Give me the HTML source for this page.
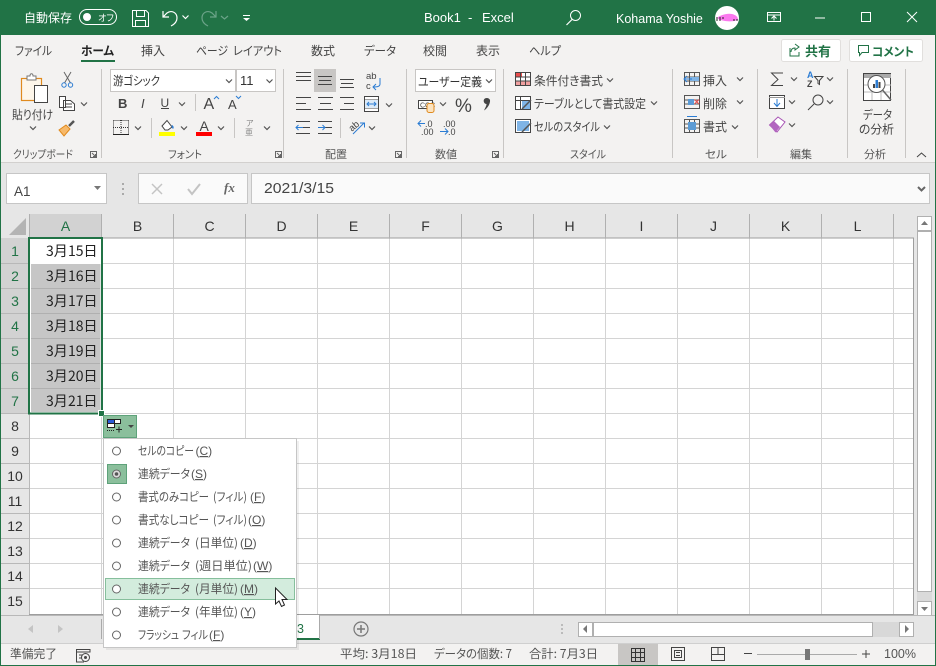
<!DOCTYPE html>
<html lang="ja"><head><meta charset="utf-8"><title>Book1 - Excel</title>
<style>
html,body{margin:0;padding:0;background:#e6e6e6}
svg{display:block;font-family:"Liberation Sans","Noto Sans CJK JP",sans-serif}
.j{font-family:"Noto Sans CJK JP","Liberation Sans",sans-serif;font-feature-settings:"palt"}
.t{font-size:12px;fill:#444}
.l{font-size:11px;fill:#555}
.hd{font-size:14px;fill:#333;text-anchor:middle}
.m{font-size:12px;fill:#555}
.d{font-size:14px;fill:#222}
</style></head><body>
<svg width="936" height="666" viewBox="0 0 936 666" xmlns="http://www.w3.org/2000/svg">
<defs>
<path id="c" d="M-3-1.500 0 1.500 3-1.500" fill="none" stroke="#555" stroke-width="1.200"/>
<path id="cw" d="M-3-1.500 0 1.500 3-1.500" fill="none" stroke="#fff" stroke-width="1.200"/>
<path id="lau" d="M.5.5H6.500V6.500H.5ZM2 2 5.500 5.500M5.500 3V5.500H3" fill="none" stroke="#666"/>
<g id="radio"><circle r="4" fill="#fff" stroke="#666"/></g>
</defs>
<rect width="936" height="666" fill="#217346"/>
<rect x="1" y="35" width="934" height="128" fill="#f3f2f1"/>
<rect x="1" y="162" width="934" height="1" fill="#d2d0ce"/>
<rect x="1" y="163" width="934" height="481" fill="#e6e6e6"/>
<rect x="1" y="644" width="934" height="21" fill="#f3f2f1"/>

<!-- title bar -->
<text class="j" x="24" y="22" font-size="12" fill="#fff">自動保存</text>
<rect x="79.500" y="9.500" width="37" height="15" rx="7.500" fill="none" stroke="#fff"/>
<circle cx="87" cy="17" r="4" fill="#fff"/>
<text class="j" x="98" y="21" font-size="9" fill="#fff">オフ</text>
<path d="M132.500 10.500H146L148.500 13V26.500H132.500ZM136.500 10.500V16.500H144.500V10.500M135.500 26.500V20.500H145.500V26.500" fill="none" stroke="#fff"/>
<path d="M163 11V17H169M163.500 16.500 167 13C171 10 177 12 177 18 177 21 175 24 171 26" fill="none" stroke="#fff" stroke-width="1.200"/>
<use href="#cw" x="185.500" y="17"/>
<path d="M216 11V17H210M215.500 16.500 212 13C208 10 202 12 202 18 202 21 204 24 208 26" fill="none" stroke="#6ba388" stroke-width="1.200"/>
<path d="M221 16 224.500 19 228 16" fill="none" stroke="#6ba388" stroke-width="1.200"/>
<path d="M243 15.500H250" stroke="#fff"/><path d="M243 18 246.500 21 250 18Z" fill="#fff"/>
<text x="424" y="22" font-size="13" fill="#fff">Book1</text>
<text x="468" y="22" font-size="13" fill="#fff">-</text>
<text x="482" y="22" font-size="13" fill="#fff">Excel</text>
<circle cx="575.500" cy="15.500" r="5" fill="none" stroke="#fff"/><path d="M572 19.500 566.500 25" stroke="#fff" stroke-width="1.200"/>
<text x="616" y="23" font-size="12.500" fill="#fff">Kohama Yoshie</text>
<circle cx="727" cy="18" r="12" fill="#fff"/>
<path d="M717 18C720 15 727 13 732 14 736 15 738 17 738 20 733 22 722 22 717 18Z" fill="#fa78ee"/>
<path d="M716 18H724M716 20H722M733 20H739" stroke="#222" stroke-dasharray="2 1"/>
<path d="M767.500 12.500H780.500V21.500H767.500ZM767.500 15H780.500M774 20.500V16.500M771.500 18.500 774 16 776.500 18.500" fill="none" stroke="#fff"/>
<path d="M815 18H825" stroke="#fff"/>
<rect x="861.500" y="12.500" width="9" height="9" fill="none" stroke="#fff"/>
<path d="M907 12 917 22M917 12 907 22" stroke="#fff"/>

<!-- tabs -->
<g class="j t">
<text x="15" y="55" textLength="37" lengthAdjust="spacingAndGlyphs">ファイル</text>
<text x="81" y="55" font-weight="700" fill="#222" textLength="33" lengthAdjust="spacingAndGlyphs">ホーム</text>
<text x="141" y="55">挿入</text>
<text x="196" y="55" textLength="32" lengthAdjust="spacingAndGlyphs">ページ</text>
<text x="233" y="55" textLength="49" lengthAdjust="spacingAndGlyphs">レイアウト</text>
<text x="311" y="55">数式</text>
<text x="364" y="55" textLength="32" lengthAdjust="spacingAndGlyphs">データ</text>
<text x="423" y="55">校閲</text>
<text x="476" y="55">表示</text>
<text x="529" y="55" textLength="32" lengthAdjust="spacingAndGlyphs">ヘルプ</text>
</g>
<rect x="81" y="60" width="34" height="2" fill="#217346"/>
<rect x="781.500" y="39.500" width="59" height="22" rx="2" fill="#fff" stroke="#e1dfdd"/>
<path d="M790 48V56H799V52M795 44 799 47 795 50V48C792 48 791 50 791 52" fill="none" stroke="#217346"/>
<text class="j" x="805" y="56" font-size="13" font-weight="700" fill="#217346">共有</text>
<rect x="849.500" y="39.500" width="73" height="22" rx="2" fill="#fff" stroke="#e1dfdd"/>
<path d="M858.500 45.500H868.500V52.500H862L859.500 55.500V52.500H858.500Z" fill="none" stroke="#217346"/>
<text class="j" x="872" y="56" font-size="12" font-weight="700" fill="#217346" textLength="42" lengthAdjust="spacingAndGlyphs">コメント</text>

<!-- group separators -->
<g fill="#c8c6c4">
<rect x="101" y="69" width="1" height="89"/><rect x="283" y="69" width="1" height="89"/><rect x="406" y="69" width="1" height="89"/><rect x="503" y="69" width="1" height="89"/><rect x="672" y="69" width="1" height="89"/><rect x="757" y="69" width="1" height="89"/><rect x="847" y="69" width="1" height="89"/><rect x="905" y="69" width="1" height="89"/>
<rect x="195" y="94" width="1" height="17"/><rect x="151" y="118" width="1" height="20"/><rect x="234" y="118" width="1" height="20"/><rect x="340" y="118" width="1" height="20"/>
</g>

<!-- clipboard -->
<rect x="21.500" y="78.500" width="20" height="22" fill="#fdf6ea" stroke="#e08a1e" stroke-width="1.200"/>
<path d="M27 78V76H30C30 73 33 73 33 76H36V80H27Z" fill="#fff" stroke="#777"/>
<rect x="34.500" y="85.500" width="13" height="17" fill="#fff" stroke="#444"/>
<text class="j" x="12" y="119" font-size="12" fill="#444" textLength="41" lengthAdjust="spacingAndGlyphs">貼り付け</text>
<use href="#c" x="33" y="128"/>
<path d="M64 72 70.500 83M71 72 64.500 83" stroke="#666" fill="none"/>
<circle cx="64" cy="85" r="2.200" fill="none" stroke="#2b7cd3"/><circle cx="70.500" cy="85" r="2.200" fill="none" stroke="#2b7cd3"/>
<path d="M59.500 96.500H65.500V107.500H59.500ZM63.500 100.500H70.500L74.500 104V110.500H63.500ZM66 104H72M66 107H72" fill="#fff" stroke="#444"/>
<use href="#c" x="84" y="104"/>
<path d="M59 130 66 125 70 129 64 136Z" fill="#f7b96a" stroke="#e08a1e"/>
<path d="M69 126 74 121" stroke="#555" stroke-width="2.500"/>
<text class="j l" x="13" y="158" textLength="60" lengthAdjust="spacingAndGlyphs">クリップボード</text>
<use href="#lau" x="90" y="151"/>

<!-- font -->
<rect x="110.500" y="69.500" width="125" height="22" fill="#fff" stroke="#c8c6c4"/>
<rect x="236.500" y="69.500" width="39" height="22" fill="#fff" stroke="#c8c6c4"/>
<text class="j" x="113" y="85" font-size="12" fill="#333" textLength="47" lengthAdjust="spacingAndGlyphs">游ゴシック</text>
<use href="#c" x="229" y="81"/>
<text x="240" y="85" font-size="13" fill="#333">11</text>
<use href="#c" x="269.500" y="81"/>
<text x="118" y="108" font-size="13" font-weight="700" fill="#444">B</text>
<text x="141" y="108" font-size="13" font-style="italic" fill="#444">I</text>
<text x="160.500" y="107" font-size="12" fill="#444">U</text><rect x="161" y="108" width="8" height="1" fill="#444"/>
<use href="#c" x="182" y="104"/>
<text x="203.500" y="109" font-size="16" fill="#444">A</text><path d="M214 99 216.500 96.500 219 99" fill="none" stroke="#2b7cd3"/>
<text x="228" y="109" font-size="13" fill="#444">A</text><path d="M236 96 238.500 98.500 241 96" fill="none" stroke="#2b7cd3"/>
<path d="M113.500 120.500H128.500M113.500 120.500V134M128.500 120.500V134M121 120V134M113 127.500H129" stroke="#333" stroke-dasharray="1 1" fill="none"/>
<rect x="113" y="134" width="16" height="1" fill="#222"/>
<use href="#c" x="138" y="128"/>
<path d="M162 126 167 120.500 172 127 168 130H165Z" fill="#fff" stroke="#444"/><path d="M172 125C174 126 174 128 173 129 172 128 171 126 172 125Z" fill="#2b7cd3"/>
<rect x="159" y="132" width="16" height="4" fill="#ff0"/>
<use href="#c" x="184" y="128"/>
<text x="199.500" y="131" font-size="14" fill="#444">A</text>
<rect x="196" y="132" width="16" height="4" fill="#f00"/>
<use href="#c" x="221" y="128"/>
<text class="j" x="246" y="126" font-size="8" fill="#888">ア</text><text class="j" x="245" y="135" font-size="8" fill="#888">亜</text>
<use href="#c" x="267" y="128"/>
<text class="j l" x="168" y="158" font-size="11.500" textLength="34" lengthAdjust="spacingAndGlyphs">フォント</text>
<use href="#lau" x="275" y="151"/>

<!-- alignment -->
<rect x="314" y="69" width="22" height="23" fill="#c8c6c4"/>
<g stroke="#444" fill="none">
<path d="M296 72.500H311M296 76.500H311M296 80.500H311"/>
<path d="M318 76.500H332M319 80.500H331M318 84.500H332"/>
<path d="M340 79.500H354M341 83.500H353M340 87.500H354"/>
<path d="M296 97.500H311M296 103.500H306M296 109.500H311M318 97.500H333M320 103.500H331M318 109.500H333M340 97.500H354M344 103.500H354M340 109.500H354"/>
<path d="M302 127.500H310M296 121.500H310M296 133.500H310"/>
<path d="M318 121.500H332M325 127.500H332M318 133.500H332"/>
</g>
<path d="M296 127.500H303M298.500 125 296 127.500 298.500 130" fill="none" stroke="#2b7cd3"/>
<path d="M318 127.500H325M322.500 125 325 127.500 322.500 130" fill="none" stroke="#2b7cd3"/>
<text x="366" y="79" font-size="9.500" fill="#444">ab</text><text x="366" y="89" font-size="9.500" fill="#444">c</text>
<path d="M380 78V84C380 87 376 87 373 87M376 84 373 87 376 90" fill="none" stroke="#2b7cd3"/>
<rect x="364.500" y="96.500" width="14" height="15" fill="#fff" stroke="#444"/><path d="M364 100H379M364 108H379" stroke="#444"/>
<rect x="365" y="100" width="13" height="8" fill="#dceaf7"/>
<path d="M367 104H376M369 102 367 104 369 106M374 102 376 104 374 106" fill="none" stroke="#2b7cd3"/>
<use href="#c" x="389" y="105"/>
<text x="349" y="130" font-size="9.500" fill="#444" transform="rotate(-40 353 127)">ab</text>
<path d="M353 134 364 123M360 123H364.500V127.500" fill="none" stroke="#2b7cd3"/>
<use href="#c" x="372" y="128"/>
<text class="j l" x="325" y="158" font-size="12">配置</text>
<use href="#lau" x="395" y="151"/>

<!-- number -->
<rect x="415.500" y="69.500" width="80" height="22" fill="#fff" stroke="#c8c6c4"/>
<text class="j" x="418" y="86" font-size="12" fill="#333" textLength="64" lengthAdjust="spacingAndGlyphs">ユーザー定義</text>
<use href="#c" x="489" y="81"/>
<rect x="418.500" y="100.500" width="14" height="8" fill="#fff" stroke="#444"/>
<text x="420" y="107.500" font-size="7" fill="#444">CCC</text>
<rect x="427" y="103.500" width="7" height="9" rx="2" fill="#fbe3c0" stroke="#e08a1e"/>
<use href="#c" x="443" y="104"/>
<text x="455" y="112" font-size="19" fill="#444">%</text>
<path d="M484 99.500C485 97.500 489 97.500 490 100 490.500 103 488 108 484 110.500 485.500 107.500 486.500 105.500 486.500 104 484.500 104 483 101.500 484 99.500Z" fill="#444"/>
<text x="425" y="127" font-size="9" fill="#444">.0</text>
<text x="421" y="135" font-size="9" fill="#444">.00</text>
<path d="M418 123.500H425M421 120.500 418 123.500 421 126.500" fill="none" stroke="#2b7cd3"/>
<text x="443" y="127" font-size="9" fill="#444">.00</text>
<text x="448" y="135" font-size="9" fill="#444">.0</text>
<path d="M440 131.500H448M445 128.500 448 131.500 445 134.500" fill="none" stroke="#2b7cd3"/>
<text class="j l" x="435" y="158" font-size="12">数値</text>
<use href="#lau" x="492" y="151"/>

<!-- styles -->
<rect x="515.500" y="72.500" width="15" height="13" fill="#fff" stroke="#444"/>
<rect x="516" y="73" width="6" height="4" fill="#e84c4c"/><rect x="516" y="81" width="14" height="4" fill="#f0a0a0"/><path d="M520.500 73V85M525.500 73V85M516 77H530M516 81H530" stroke="#444"/>
<rect x="515.500" y="96.500" width="15" height="13" fill="#fff" stroke="#444"/><rect x="522" y="100" width="8" height="9" fill="#7fb4e6"/><path d="M520.500 97V110M516 100.500H530" stroke="#444"/><path d="M522 109 531 100" stroke="#555" stroke-width="1.500"/>
<rect x="515.500" y="119.500" width="15" height="13" fill="#fff" stroke="#444"/><rect x="517" y="121" width="12" height="10" fill="#7fb4e6"/><path d="M522 132 531 123" stroke="#555" stroke-width="1.500"/>
<g class="j" font-size="12" fill="#444">
<text x="534" y="85" textLength="69" lengthAdjust="spacingAndGlyphs">条件付き書式</text>
<text x="534" y="108" textLength="112" lengthAdjust="spacingAndGlyphs">テーブルとして書式設定</text>
<text x="534" y="131" textLength="66" lengthAdjust="spacingAndGlyphs">セルのスタイル</text>
</g>
<use href="#c" x="610" y="80"/><use href="#c" x="654" y="103"/><use href="#c" x="607" y="127"/>
<text class="j l" x="570" y="158" font-size="12" textLength="36" lengthAdjust="spacingAndGlyphs">スタイル</text>

<!-- cells -->
<path d="M684.500 72.500H699.500V85.500H684.500ZM684 77H700M684 81H700M689.500 72V86M694.500 72V86" fill="none" stroke="#555"/>
<rect x="690" y="77" width="9" height="4" fill="#7fb4e6"/><path d="M684 79H692M687 76 684 79 687 82" fill="none" stroke="#2b7cd3"/>
<path d="M684.500 95.500H699.500V108.500H684.500ZM684 100H700M684 104H700" fill="none" stroke="#555"/><rect x="688" y="99" width="6" height="6" fill="#5b9bd5"/>
<path d="M694.500 99.500 699 104M699 99.500 694.500 104" stroke="#e84c4c"/>
<path d="M684.500 119.500H699.500V132.500H684.500ZM689.500 120V133M694.500 120V133M684 124H700M684 128H700" fill="none" stroke="#555"/><rect x="688" y="122" width="8" height="8" fill="#5b9bd5"/>
<path d="M687 116.500H697" stroke="#2b7cd3"/>
<g class="j" font-size="12" fill="#444">
<text x="703" y="85">挿入</text><text x="703" y="108">削除</text><text x="703" y="131">書式</text>
</g>
<use href="#c" x="740" y="79"/><use href="#c" x="740" y="102"/><use href="#c" x="735" y="127"/>
<text class="j l" x="705" y="158" font-size="12" textLength="22" lengthAdjust="spacingAndGlyphs">セル</text>

<!-- editing -->
<path d="M783 73H771.500L778 79.500 771.500 85.500H783" fill="none" stroke="#444"/>
<use href="#c" x="794" y="79"/>
<text x="807" y="78" font-size="9" font-weight="700" fill="#2b7cd3">A</text><text x="807" y="87" font-size="9" font-weight="700" fill="#444">Z</text>
<path d="M814.500 76.500H823L819.500 80.500V84.500L818 83.500V80.500Z" fill="none" stroke="#444"/>
<use href="#c" x="830" y="79"/>
<rect x="769.500" y="95.500" width="15" height="13" fill="#fff" stroke="#444"/><path d="M769 97.500H785" stroke="#999"/><path d="M777 99V106M774 103 777 106.500 780 103" fill="none" stroke="#2b7cd3"/>
<use href="#c" x="792" y="102"/>
<circle cx="818" cy="100" r="5" fill="none" stroke="#444"/><path d="M814 104 808 110" stroke="#444"/>
<use href="#c" x="830" y="102"/>
<path d="M769.500 125 778 117 785 122 777 132Z" fill="#fff" stroke="#a855b5"/><path d="M769.500 125 774 121 780 127 775.500 132.500Z" fill="#b266c0"/>
<use href="#c" x="792" y="125"/>
<text class="j l" x="790" y="158" font-size="12">編集</text>

<!-- analysis -->
<rect x="863.500" y="73.500" width="27" height="27" fill="#fff" stroke="#444"/><rect x="864" y="74" width="27" height="4" fill="#aaa"/>
<path d="M864 85H891M864 92H891M872 78V100M881 78V100" stroke="#bbb"/>
<circle cx="876.500" cy="84" r="8.500" fill="#fff" stroke="#555"/><path d="M882.500 90 891 100" stroke="#666" stroke-width="1.500"/>
<rect x="873" y="84" width="2" height="4" fill="#444"/><rect x="875.500" y="80" width="2.500" height="8" fill="#2b7cd3"/><rect x="878.500" y="82" width="2" height="6" fill="#444"/>
<text class="j" x="863" y="119" font-size="12" fill="#444" textLength="29" lengthAdjust="spacingAndGlyphs">データ</text>
<text class="j" x="859" y="133.500" font-size="12" fill="#444" textLength="35" lengthAdjust="spacingAndGlyphs">の分析</text>
<text class="j l" x="864" y="158" font-size="12">分析</text>
<path d="M917 157 921.500 153 926 157" fill="none" stroke="#444"/>

<!-- formula bar -->
<rect x="6.500" y="173.500" width="100" height="30" fill="#fff" stroke="#c6c6c6"/>
<text x="14" y="196" font-size="13.500" fill="#444">A1</text>
<path d="M94 186H101L97.500 190Z" fill="#777"/>
<g fill="#aaa"><rect x="122" y="183" width="2" height="2"/><rect x="122" y="188" width="2" height="2"/><rect x="122" y="193" width="2" height="2"/></g>
<rect x="138.500" y="173.500" width="109" height="30" fill="#fafafa" stroke="#c6c6c6"/>
<path d="M152 184 162 194M162 184 152 194" stroke="#c4c4c4" stroke-width="1.500"/>
<path d="M188 189 192 194 200 184" fill="none" stroke="#c4c4c4" stroke-width="2"/>
<text x="224" y="192" font-size="13" font-style="italic" font-weight="700" fill="#666" font-family="Liberation Serif">fx</text>
<rect x="251.500" y="173.500" width="678" height="30" fill="#fafafa" stroke="#c6c6c6"/>
<text x="264" y="193" font-size="14.500" fill="#444" textLength="70" lengthAdjust="spacingAndGlyphs">2021/3/15</text>
<path d="M918 187 921.500 190.500 925 187" fill="none" stroke="#666" stroke-width="2"/>

<!-- grid -->
<rect x="30" y="238" width="884" height="376" fill="#fff"/>
<g stroke="#d4d4d4">
<path d="M101.500 238V614M173.500 238V614M245.500 238V614M317.500 238V614M389.500 238V614M461.500 238V614M533.500 238V614M605.500 238V614M677.500 238V614M749.500 238V614M821.500 238V614M893.500 238V614"/>
<path d="M30 263.500H913M30 288.500H913M30 313.500H913M30 338.500H913M30 363.500H913M30 388.500H913M30 413.500H913M30 438.500H913M30 463.500H913M30 488.500H913M30 513.500H913M30 538.500H913M30 563.500H913M30 588.500H913"/>
</g>
<path d="M913.500 238V614.500H29" fill="none" stroke="#9e9e9e"/>
<path d="M29 238H914" stroke="#9e9e9e"/>

<!-- column headers -->
<path d="M26 218V235H9Z" fill="#b4b4b4"/>
<rect x="29" y="214" width="73" height="24" fill="#d2d2d2"/>
<g stroke="#b0b0b0">
<path d="M29.500 214V238M101.500 214V238M173.500 214V238M245.500 214V238M317.500 214V238M389.500 214V238M461.500 214V238M533.500 214V238M605.500 214V238M677.500 214V238M749.500 214V238M821.500 214V238M893.500 214V238"/>
</g>
<g class="hd">
<text x="65.500" y="231" fill="#217346">A</text><text x="137.500" y="231">B</text><text x="209.500" y="231">C</text><text x="281.500" y="231">D</text><text x="353.500" y="231">E</text><text x="425.500" y="231">F</text><text x="497.500" y="231">G</text><text x="569.500" y="231">H</text><text x="641.500" y="231">I</text><text x="713.500" y="231">J</text><text x="785.500" y="231">K</text><text x="857.500" y="231">L</text>
</g>

<!-- row headers -->
<rect x="1" y="238" width="28" height="176" fill="#d2d2d2"/>
<g stroke="#b8b8b8">
<path d="M1 263.500H29M1 288.500H29M1 313.500H29M1 338.500H29M1 363.500H29M1 388.500H29M1 413.500H29M1 438.500H29M1 463.500H29M1 488.500H29M1 513.500H29M1 538.500H29M1 563.500H29M1 588.500H29M29.500 238V614"/>
</g>
<g class="hd">
<text x="15" y="256" fill="#217346">1</text><text x="15" y="281" fill="#217346">2</text><text x="15" y="306" fill="#217346">3</text><text x="15" y="331" fill="#217346">4</text><text x="15" y="356" fill="#217346">5</text><text x="15" y="381" fill="#217346">6</text><text x="15" y="406" fill="#217346">7</text>
<text x="15" y="431">8</text><text x="15" y="456">9</text><text x="15" y="481">10</text><text x="15" y="506">11</text><text x="15" y="531">12</text><text x="15" y="556">13</text><text x="15" y="581">14</text><text x="15" y="606">15</text>
</g>

<!-- selection -->
<rect x="30" y="239" width="71" height="173" fill="#fff"/>
<rect x="31" y="264" width="69.500" height="148" fill="#c6c6c6"/>
<path d="M31 288.500H100M31 313.500H100M31 338.500H100M31 363.500H100M31 388.500H100" stroke="#b0b0b0"/>
<rect x="29" y="238" width="73" height="175.500" fill="none" stroke="#217346" stroke-width="2"/>
<rect x="98.500" y="410.500" width="6" height="6" fill="#217346" stroke="#fff"/>
<g class="j d">
<text y="256"><tspan x="46">3月</tspan><tspan x="68">15日</tspan></text>
<text y="281"><tspan x="46">3月</tspan><tspan x="68">16日</tspan></text>
<text y="306"><tspan x="46">3月</tspan><tspan x="68">17日</tspan></text>
<text y="331"><tspan x="46">3月</tspan><tspan x="68">18日</tspan></text>
<text y="356"><tspan x="46">3月</tspan><tspan x="68">19日</tspan></text>
<text y="381"><tspan x="46">3月</tspan><tspan x="68">20日</tspan></text>
<text y="406"><tspan x="46">3月</tspan><tspan x="68">21日</tspan></text>
</g>

<!-- scrollbars -->
<rect x="917" y="216" width="15" height="399" fill="#dadada"/>
<rect x="917.500" y="231.500" width="14" height="360" fill="#fff" stroke="#b0b0b0"/>
<rect x="917.500" y="216.500" width="14" height="14" fill="#fff" stroke="#b0b0b0"/>
<path d="M921 225H928L924.500 221Z" fill="#777"/>
<rect x="917.500" y="601.500" width="14" height="14" fill="#fff" stroke="#b0b0b0"/>
<path d="M921 607H928L924.500 611Z" fill="#777"/>

<!-- sheet tabs -->
<rect x="1" y="615" width="934" height="28" fill="#e6e6e6"/>
<rect x="1" y="615" width="934" height="1" fill="#b8b8b8"/>
<rect x="1" y="643" width="934" height="1" fill="#cfcfcf"/>
<path d="M33 625V633L28 629ZM58 625V633L63 629Z" fill="#c4c4c4"/>
<rect x="101" y="619" width="1" height="20" fill="#aaa"/>
<rect x="296" y="615" width="23" height="23" fill="#fff"/>
<rect x="296" y="638" width="24" height="2" fill="#217346"/>
<rect x="319" y="615" width="1" height="24" fill="#aaa"/>
<text x="297" y="633" font-size="12.500" fill="#217346">3</text>
<circle cx="361" cy="629" r="7" fill="none" stroke="#777" stroke-width="1.200"/>
<path d="M357 629H365M361 625V633" stroke="#777" stroke-width="1.500"/>
<g fill="#bbb"><rect x="561" y="624" width="2" height="2"/><rect x="561" y="628" width="2" height="2"/><rect x="561" y="632" width="2" height="2"/></g>
<rect x="578.500" y="622.500" width="14" height="14" fill="#fff" stroke="#b0b0b0"/>
<path d="M587 625V633L583 629Z" fill="#777"/>
<rect x="593" y="622" width="306" height="15" fill="#d8d8d8"/>
<rect x="593.500" y="622.500" width="279" height="14" fill="#fff" stroke="#b0b0b0"/>
<rect x="899.500" y="622.500" width="14" height="14" fill="#fff" stroke="#b0b0b0"/>
<path d="M905 625V633L909 629Z" fill="#777"/>

<!-- status bar -->
<rect x="1" y="644" width="934" height="21" fill="#f3f2f1"/>
<text class="j" x="10" y="658" font-size="12" fill="#555" textLength="47" lengthAdjust="spacingAndGlyphs">準備完了</text>
<path d="M76.500 649.500H90V652H76.500ZM76.500 652V662H84M79 655H84M79 658H83" fill="none" stroke="#444"/><circle cx="85.500" cy="657.500" r="4" fill="#f3f2f1" stroke="#444"/><circle cx="85.500" cy="657.500" r="1.500" fill="#444"/>
<g class="j" font-size="12" fill="#555">
<text x="340" y="658" textLength="77" lengthAdjust="spacingAndGlyphs">平均: 3月18日</text>
<text x="434" y="658" textLength="78" lengthAdjust="spacingAndGlyphs">データの個数: 7</text>
<text x="529" y="658" textLength="69" lengthAdjust="spacingAndGlyphs">合計: 7月3日</text>
</g>
<rect x="618" y="644" width="40" height="21" fill="#c8c6c4"/>
<path d="M631.500 648.500H644.500V661.500H631.500ZM631 652.500H645M631 657.500H645M635.500 648V662M640.500 648V662" fill="none" stroke="#333"/>
<path d="M671.500 647.500H684.500V660.500H671.500ZM674.500 650.500H681.500V657.500H674.500ZM676 652.500H680M676 655.500H680" fill="none" stroke="#444"/>
<path d="M711.500 647.500H724.500V660.500H711.500ZM711.500 654.500H724.500M718 647.500V654.500" fill="none" stroke="#444"/>
<path d="M744 653.500H752" stroke="#444"/>
<path d="M757 654.500H857" stroke="#aaa"/>
<rect x="805" y="649" width="5" height="11" fill="#777"/>
<path d="M862 654H870M866 650V658" stroke="#444"/>
<text x="884" y="658" font-size="13" fill="#555" textLength="32" lengthAdjust="spacingAndGlyphs">100%</text>

<!-- autofill button -->
<rect x="103.500" y="415.500" width="33" height="22" fill="#8bbf9c" stroke="#5ea27a"/>
<rect x="107.500" y="419.500" width="7" height="4" fill="#2a5bd8" stroke="#222"/>
<rect x="114.500" y="419.500" width="6" height="4" fill="#fff" stroke="#222"/>
<rect x="107.500" y="423.500" width="7" height="4" fill="#fff" stroke="#222"/>
<path d="M107 430.500H115" stroke="#222" stroke-dasharray="1 1"/>
<path d="M116 429.500H122M119 426.500V432.500" stroke="#222"/>
<path d="M128 425H134L131 428Z" fill="#444"/>

<!-- context menu -->
<rect x="106" y="441" width="193" height="209" fill="#000" opacity=".06"/>
<rect x="103.500" y="438.500" width="193" height="209" fill="#fff" stroke="#c6c6c6"/>
<rect x="107.500" y="464.500" width="19" height="19" fill="#8bbf9c" stroke="#5ea27a"/>
<rect x="105.500" y="578.500" width="189" height="21" fill="#d3ecdd" stroke="#86bf9c"/>
<use href="#radio" x="116.500" y="451"/>
<circle cx="116.500" cy="474" r="4" fill="#ddd" stroke="#666"/><circle cx="116.500" cy="474" r="1.800" fill="#555"/>
<use href="#radio" x="116.500" y="497"/><use href="#radio" x="116.500" y="520"/><use href="#radio" x="116.500" y="543"/><use href="#radio" x="116.500" y="566"/><use href="#radio" x="116.500" y="589"/><use href="#radio" x="116.500" y="612"/><use href="#radio" x="116.500" y="635"/>
<g class="j m">
<text x="138" y="455" textLength="56" lengthAdjust="spacingAndGlyphs">セルのコピー</text>
<text x="138" y="478" textLength="52" lengthAdjust="spacingAndGlyphs">連続データ</text>
<text x="138" y="501" textLength="71" lengthAdjust="spacingAndGlyphs">書式のみコピー</text>
<text x="213" y="501" textLength="34" lengthAdjust="spacingAndGlyphs">(フィル)</text>
<text x="138" y="524" textLength="71" lengthAdjust="spacingAndGlyphs">書式なしコピー</text>
<text x="213" y="524" textLength="34" lengthAdjust="spacingAndGlyphs">(フィル)</text>
<text x="138" y="547" textLength="52" lengthAdjust="spacingAndGlyphs">連続データ</text><text x="195" y="547" textLength="43" lengthAdjust="spacingAndGlyphs">(日単位)</text>
<text x="138" y="570" textLength="52" lengthAdjust="spacingAndGlyphs">連続データ</text><text x="195" y="570" textLength="57" lengthAdjust="spacingAndGlyphs">(週日単位)</text>
<text x="138" y="593" textLength="52" lengthAdjust="spacingAndGlyphs">連続データ</text><text x="195" y="593" textLength="43" lengthAdjust="spacingAndGlyphs">(月単位)</text>
<text x="138" y="616" textLength="52" lengthAdjust="spacingAndGlyphs">連続データ</text><text x="195" y="616" textLength="43" lengthAdjust="spacingAndGlyphs">(年単位)</text>
<text x="138" y="639" textLength="41" lengthAdjust="spacingAndGlyphs">フラッシュ</text><text x="182" y="639" textLength="26" lengthAdjust="spacingAndGlyphs">フィル</text>
</g>
<g font-size="12" fill="#555">
<text x="195.500" y="455">(<tspan text-decoration="underline">C</tspan>)</text>
<text x="191" y="478">(<tspan text-decoration="underline">S</tspan>)</text>
<text x="250" y="501">(<tspan text-decoration="underline">F</tspan>)</text>
<text x="248" y="524">(<tspan text-decoration="underline">O</tspan>)</text>
<text x="240" y="547">(<tspan text-decoration="underline">D</tspan>)</text>
<text x="253" y="570">(<tspan text-decoration="underline">W</tspan>)</text>
<text x="240" y="593">(<tspan text-decoration="underline">M</tspan>)</text>
<text x="240" y="616">(<tspan text-decoration="underline">Y</tspan>)</text>
<text x="209" y="639">(<tspan text-decoration="underline">F</tspan>)</text>
</g>

<!-- cursor -->
<path d="M275.500 588V604L279 601 281.500 606.500 284.500 605 282 599.500H287Z" fill="#fff" stroke="#222"/>
</svg>
</body></html>
